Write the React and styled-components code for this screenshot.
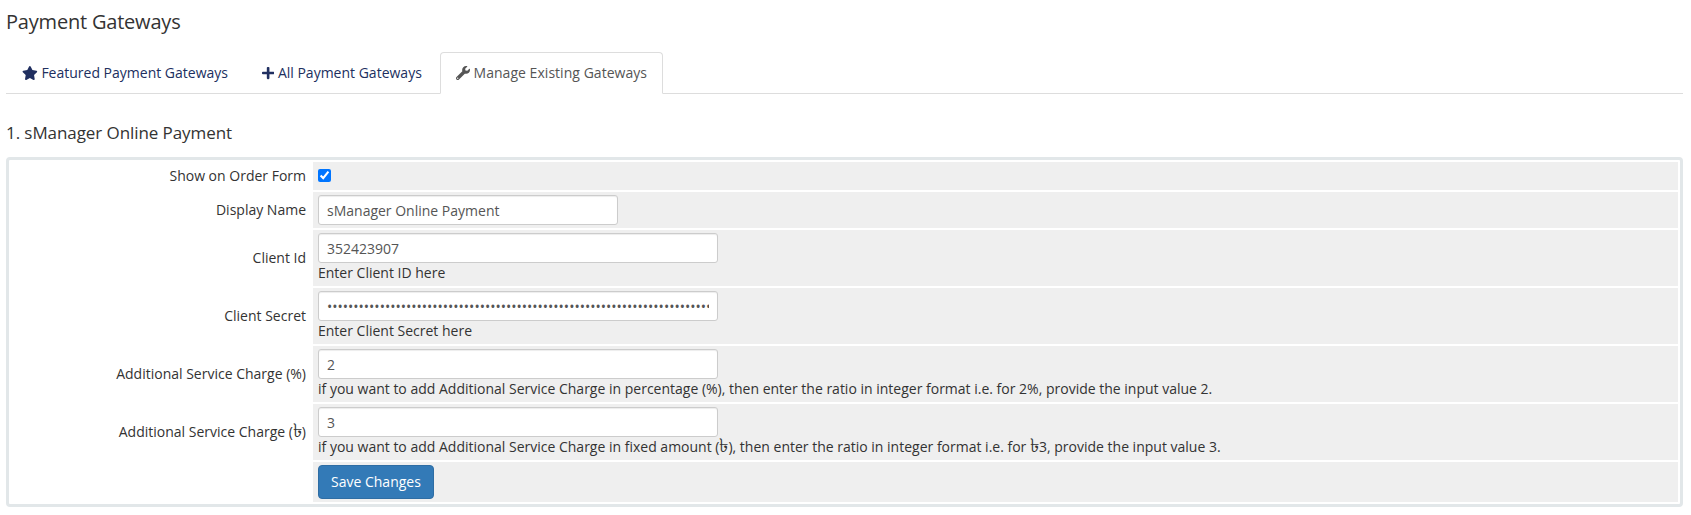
import React from "react";
import styled, { createGlobalStyle } from "styled-components";
import { FaStar, FaPlus, FaWrench } from "react-icons/fa";

const GlobalStyle = createGlobalStyle`
  *, *::before, *::after { box-sizing: border-box; }
  body {
    margin: 0;
    background: #fff;
    color: #333;
    font: 14px/20px "Open Sans", "Noto Sans", sans-serif;
  }
`;

const Page = styled.main`
  padding: 9px 8px 8px 6px;
`;

const Title = styled.h1`
  margin: 0 0 17px;
  font-size: 20px;
  font-weight: 400;
  line-height: 26px;
  letter-spacing: -0.2px;
`;

const Tabs = styled.nav`
  display: flex;
  gap: 2px;
  border-bottom: 1px solid #ddd;
`;

const Tab = styled.a`
  margin-bottom: -1px;
  padding: 10px 15px;
  border: 1px solid ${(p) => (p.$active ? "#ddd" : "transparent")};
  border-bottom-color: ${(p) => (p.$active ? "#fff" : "transparent")};
  border-radius: 4px 4px 0 0;
  background: ${(p) => (p.$active ? "#fff" : "transparent")};
  color: ${(p) => (p.$active ? "#555" : "#202f60")};
  letter-spacing: ${(p) => (p.$active ? "0.04px" : "normal")};
  white-space: nowrap;

  svg {
    width: ${(p) => p.$icon}px;
    height: 14px;
    vertical-align: -2px;
  }
`;

const SectionTitle = styled.h2`
  margin: 28px 0 14px;
  font-size: 17px;
  font-weight: 400;
  line-height: 21px;
  letter-spacing: -0.08px;
`;

const Form = styled.form`
  display: grid;
  gap: 2px;
  padding: 2px;
  border: 3px solid #e2e7e9;
  border-radius: 4px;
`;

const Row = styled.div`
  display: grid;
  grid-template-columns: 300px 1fr;
  gap: 2px;
  min-height: ${(p) => p.$height}px;
`;

const Label = styled.label`
  display: flex;
  align-items: center;
  justify-content: flex-end;
  padding: 0 5px;
`;

const Field = styled.div`
  padding: 3px 5px;
  background: #efefef;
`;

const Input = styled.input`
  display: block;
  width: ${(p) => p.$width}px;
  height: 30px;
  padding: 5px 8px;
  border: 1px solid #ccc;
  border-radius: 3px;
  background: #fff;
  box-shadow: inset 0 1px 1px rgba(0, 0, 0, 0.075);
  color: #555;
  font: inherit;
`;

const Checkbox = styled.input`
  display: block;
  width: 13px;
  height: 13px;
  margin: 4px 0 0;
  accent-color: #0075ff;
`;

const Help = styled.div`
  white-space: nowrap;
`;

const Taka = styled.span`
  font-size: 18.5px;
  line-height: 0;
`;

const SaveButton = styled.button`
  display: block;
  height: 34px;
  padding: 6px 12px;
  border: 1px solid #2e6da4;
  border-radius: 4px;
  background: #337ab7;
  color: #fff;
  font: inherit;
`;

const taka = <Taka>৳</Taka>;

const fields = [
  { id: "name", label: "Display Name", value: "sManager Online Payment", width: 300, height: 36 },
  { id: "client", label: "Client Id", value: "352423907", width: 400, height: 56, help: "Enter Client ID here" },
  { id: "secret", label: "Client Secret", value: "x".repeat(96), type: "password", width: 400, height: 56, help: "Enter Client Secret here" },
  {
    id: "percent", label: "Additional Service Charge (%)", value: "2", width: 400, height: 56,
    help: "if you want to add Additional Service Charge in percentage (%), then enter the ratio in integer format i.e. for 2%, provide the input value 2.",
  },
  {
    id: "fixed", label: <>Additional Service Charge ({taka})</>, value: "3", width: 400, height: 56,
    help: <>if you want to add Additional Service Charge in fixed amount ({taka}), then enter the ratio in integer format i.e. for {taka}3, provide the input value 3.</>,
  },
];

export default function App() {
  return (
    <>
      <GlobalStyle />
      <Page>
        <Title>Payment Gateways</Title>
        <Tabs>
          <Tab $icon={15.75}><FaStar /> Featured Payment Gateways</Tab>
          <Tab $icon={12.25}><FaPlus /> All Payment Gateways</Tab>
          <Tab $icon={14} $active><FaWrench /> Manage Existing Gateways</Tab>
        </Tabs>
        <SectionTitle>1. sManager Online Payment</SectionTitle>
        <Form>
          <Row $height={28}>
            <Label htmlFor="show">Show on Order Form</Label>
            <Field><Checkbox id="show" type="checkbox" defaultChecked /></Field>
          </Row>
          {fields.map((f) => (
            <Row key={f.id} $height={f.height}>
              <Label htmlFor={f.id}><span>{f.label}</span></Label>
              <Field>
                <Input id={f.id} type={f.type || "text"} defaultValue={f.value} $width={f.width} />
                {f.help && <Help>{f.help}</Help>}
              </Field>
            </Row>
          ))}
          <Row $height={40}>
            <span />
            <Field><SaveButton type="button">Save Changes</SaveButton></Field>
          </Row>
        </Form>
      </Page>
    </>
  );
}
